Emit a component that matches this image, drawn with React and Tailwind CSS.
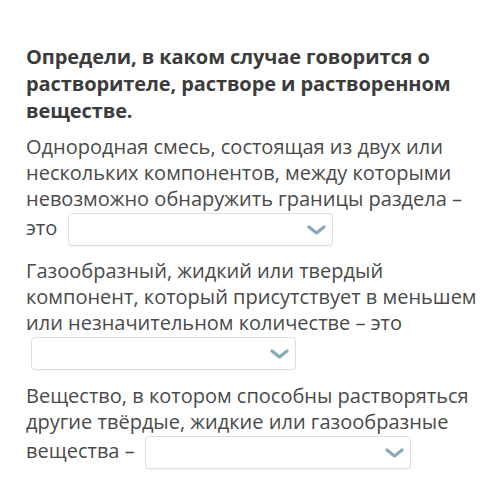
import React from "react";

function Select({ w }) {
  return (
    <span
      className="inline-flex items-center justify-end align-middle h-[33px] ml-[5px] my-[1px] rounded-[4px] border border-[#d9dfe2] bg-white pr-[6px] shadow-[0_1px_1px_rgba(0,0,0,0.04)]"
      style={{ width: w }}
    >
      <svg width="19" height="10" viewBox="0 0 19 10">
        <path d="M2 2 L9.5 8 L17 2" fill="none" stroke="#86aab9" strokeWidth="3.2" strokeLinecap="round" strokeLinejoin="round" />
      </svg>
    </span>
  );
}

export default function App() {
  return (
    <div className="w-[500px] h-[502px] bg-white overflow-hidden pl-[26px] pr-[20px] pt-[43px] font-['Open_Sans',sans-serif]">
      <h1 className="text-[20px] leading-[27px] font-bold text-[#3c3c3c] tracking-[-0.1px]">
        Определи, в каком случае говорится о растворителе, растворе и растворенном веществе.
      </h1>
      <p className="mt-[10px] text-[20px] leading-[26px] text-[#4a4a4a]">
        Однородная смесь, состоящая из двух или нескольких компонентов, между которыми невозможно обнаружить границы раздела – это{" "}
        <Select w={265} />
      </p>
      <p className="mt-[11px] text-[20px] leading-[26px] text-[#4a4a4a]">
        Газообразный, жидкий или твердый компонент, который присутствует в меньшем или незначительном количестве – это{" "}
        <Select w={265} />
      </p>
      <p className="mt-[12px] text-[20px] leading-[26px] text-[#4a4a4a]">
        Вещество, в котором способны растворяться другие твёрдые, жидкие или газообразные вещества –{" "}
        <Select w={266} />
      </p>
    </div>
  );
}
